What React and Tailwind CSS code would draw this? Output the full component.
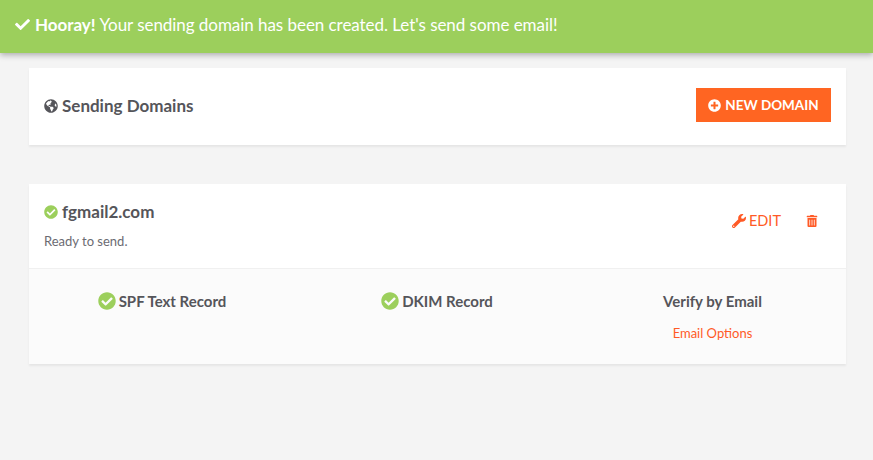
import React from "react";
import { FaCheck, FaGlobeAmericas, FaPlusCircle, FaWrench, FaTrashAlt, FaCheckCircle } from "react-icons/fa";

function Status({ label }) {
  return (
    <div className="flex items-center justify-center gap-[3px] text-[15px] leading-[20px] font-bold text-[#55555a]">
      <FaCheckCircle className="text-[#9ccf5c] text-[18px]" />
      <span>{label}</span>
    </div>
  );
}

export default function App() {
  return (
    <div className="min-h-[460px] bg-[#f4f4f4] font-['Lato',sans-serif] overflow-hidden">
      <div className="h-[53px] bg-[#9ccf5c] shadow-[0_2px_6px_rgba(0,0,0,0.3)] flex items-center pl-[15px] pb-[4px] text-white text-[17px] tracking-[-0.05px] relative">
        <FaCheck className="text-[15px] mr-[5px]" />
        <span className="font-bold mr-[4px]">Hooray!</span>
        <span>Your sending domain has been created. Let's send some email!</span>
      </div>

      <div className="ml-[29px] mr-[27px] mt-[15px] h-[77px] bg-white shadow-[0_2px_2px_rgba(0,0,0,0.06)] flex items-center justify-between pl-[15px] pr-[15px]">
        <div className="flex items-center gap-[4px] text-[#55555a] font-bold text-[17px] -mt-[1px]">
          <FaGlobeAmericas className="text-[14px]" />
          <span>Sending Domains</span>
        </div>
        <button className="h-[34px] w-[135px] -mt-[4px] pt-[1px] bg-[#ff6522] text-white font-bold text-[13.5px] flex items-center justify-center gap-[4px]">
          <FaPlusCircle className="text-[13px]" />
          <span>NEW DOMAIN</span>
        </button>
      </div>

      <div className="ml-[29px] mr-[27px] mt-[39px] h-[180px] bg-white shadow-[0_2px_2px_rgba(0,0,0,0.06)] flex flex-col">
        <div className="h-[85px] border-b border-[#f0f0f0] flex justify-between pl-[15px] pr-[28px]">
          <div className="pt-[15px]">
            <div className="flex items-center gap-[4px] text-[#55555a] font-bold text-[17px]">
              <FaCheckCircle className="text-[#9ccf5c] text-[14px]" />
              <span>fgmail2.com</span>
            </div>
            <div className="mt-[7px] text-[13px] text-[#6b6b72]">Ready to send.</div>
          </div>
          <div className="flex items-center gap-[25px] text-[#ff5a26] text-[14.5px] -mt-[11px]">
            <div className="flex items-center gap-[3px]">
              <FaWrench className="text-[14px]" />
              <span>EDIT</span>
            </div>
            <FaTrashAlt className="text-[12px]" />
          </div>
        </div>
        <div className="flex-1 bg-[#fbfbfb] grid grid-cols-[266px_284px_1fr] pt-[22px]">
          <div>
            <Status label="SPF Text Record" />
          </div>
          <div>
            <Status label="DKIM Record" />
          </div>
          <div className="text-center">
            <div className="text-[15px] font-bold text-[#55555a] leading-[20px]">Verify by Email</div>
            <div className="mt-[13px] text-[13px] text-[#ff5a26]">Email Options</div>
          </div>
        </div>
      </div>
    </div>
  );
}
